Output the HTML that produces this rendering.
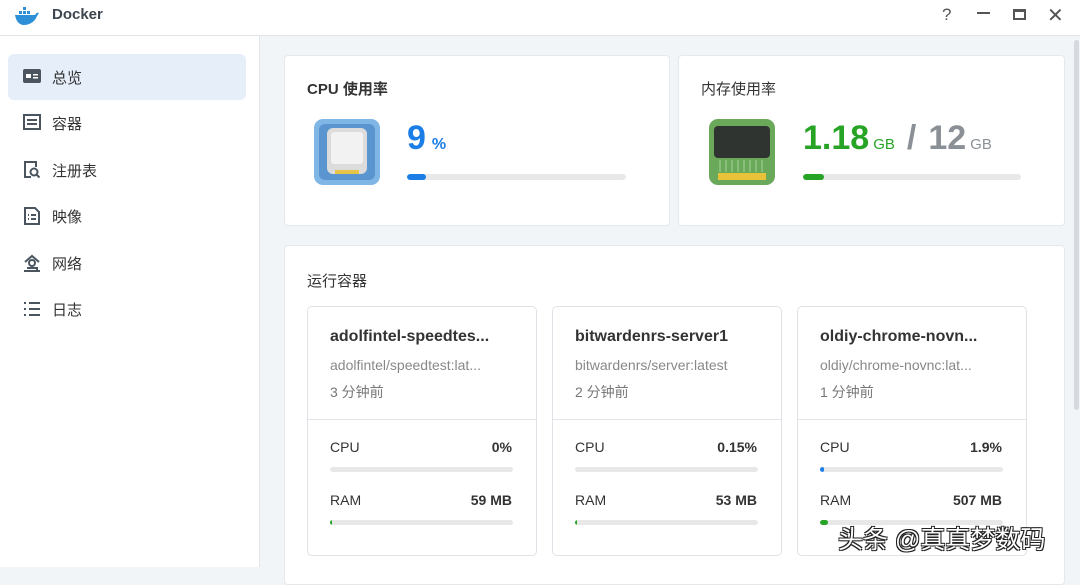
<!DOCTYPE html>
<html><head><meta charset="utf-8"><style>
*{box-sizing:border-box;margin:0;padding:0}
body{width:1080px;height:567px;overflow:hidden;background:#f2f5f8;font-family:"Liberation Sans","Noto Sans CJK SC",sans-serif;color:#333;position:relative}
.title{position:absolute;left:0;top:0;width:1080px;height:36px;background:#fff;border-bottom:1px solid #e2e6ea}
.title .t{position:absolute;left:52px;top:6px;font-weight:bold;font-size:15px;color:#3d4650}
.ctl{position:absolute;top:5px;font-size:17px;color:#555}
.side{position:absolute;left:0;top:36px;width:260px;height:531px;background:#fff;border-right:1px solid #e2e6ea}
.item{position:absolute;left:8px;width:238px;height:46px;border-radius:6px;font-size:15px;color:#333}
.item span{position:absolute;left:44px;top:13px}
.item svg{position:absolute;left:15px;top:14px}
.card{position:absolute;background:#fff;border:1px solid #e6e9ec;border-radius:4px}
h3{position:absolute;font-size:15px;font-weight:bold;color:#333}
.bar{position:absolute;height:6px;background:#e8e8e8;border-radius:3px;overflow:hidden}
.bar i{display:block;height:100%;border-radius:3px}
.cc{position:absolute;top:306px;width:230px;height:250px;background:#fff;border:1px solid #dfe3e7;border-radius:5px}
.cc .n{position:absolute;left:22px;top:21px;font-weight:bold;font-size:16px;color:#333}
.cc .im{position:absolute;left:22px;top:50px;font-size:14px;color:#888}
.cc .tm{position:absolute;left:22px;top:75px;font-size:14px;color:#777}
.cc hr{position:absolute;left:0;top:112px;width:228px;border:0;border-top:1px solid #e2e6ea}
.cc .l{position:absolute;left:22px;font-size:14px;color:#333}
.cc .v{position:absolute;right:24px;font-size:14px;font-weight:bold;color:#333}
.cc .bar{left:22px;width:183px;height:5px}
</style></head><body>
<div class="title">
<svg style="position:absolute;left:14px;top:6px" width="26" height="20" viewBox="0 0 26 20"><path d="M1 9h20c1-2 3-3 4-2-1 1-1 2-2 3-2 6-8 9-13 9C5 19 2 15 1 9z" fill="#2c8fd8"/><rect x="5" y="5" width="3" height="3" fill="#2c8fd8"/><rect x="9" y="5" width="3" height="3" fill="#2c8fd8"/><rect x="13" y="5" width="3" height="3" fill="#2c8fd8"/><rect x="9" y="1" width="3" height="3" fill="#2c8fd8"/></svg>
<div class="t">Docker</div>
<div class="ctl" style="left:942px">?</div>
<div class="ctl" style="left:977px;top:12px;width:13px;height:2px;background:#555"></div>
<div class="ctl" style="left:1013px;top:9px;width:13px;height:11px;border:2px solid #555;border-top-width:3px"></div>
<div class="ctl" style="left:1047px;top:3px;font-size:20px">✕</div>
</div>
<div class="side">
<div class="item" style="top:18px;background:#e6eefa"><svg width="18" height="16"><rect x="0" y="1" width="18" height="14" rx="2" fill="#4a5560"/><rect x="3" y="6" width="5" height="4" fill="#fff"/><rect x="10" y="6" width="5" height="1.5" fill="#fff"/><rect x="10" y="9" width="5" height="1.5" fill="#fff"/></svg><span>总览</span></div>
<div class="item" style="top:64px"><svg width="18" height="16"><rect x="1" y="1" width="16" height="14" fill="none" stroke="#4a5560" stroke-width="2"/><path d="M4 6h10M4 10h10" stroke="#4a5560" stroke-width="2"/></svg><span>容器</span></div>
<div class="item" style="top:111px"><svg width="18" height="18"><path d="M8 16H2V1h11v5" fill="none" stroke="#4a5560" stroke-width="2"/><circle cx="11" cy="11" r="3.5" fill="none" stroke="#4a5560" stroke-width="2"/><path d="M13.5 13.5l3 3" stroke="#4a5560" stroke-width="2"/></svg><span>注册表</span></div>
<div class="item" style="top:157px"><svg width="18" height="18"><path d="M2 1h10l4 4v12H2z" fill="none" stroke="#4a5560" stroke-width="2"/><path d="M5 8h1M5 12h1M8 8h5M8 12h5" stroke="#4a5560" stroke-width="2"/></svg><span>映像</span></div>
<div class="item" style="top:204px"><svg width="18" height="18"><path d="M2 8L9 2l7 6" fill="none" stroke="#4a5560" stroke-width="2"/><circle cx="9" cy="9" r="3" fill="none" stroke="#4a5560" stroke-width="2"/><path d="M4 14h10v3M1 17h16" stroke="#4a5560" stroke-width="2" fill="none"/></svg><span>网络</span></div>
<div class="item" style="top:250px"><svg width="18" height="18"><path d="M1 3h2M1 9h2M1 15h2M6 3h11M6 9h11M6 15h11" stroke="#4a5560" stroke-width="2"/></svg><span>日志</span></div>
</div>
<div style="position:absolute;left:1074px;top:40px;width:5px;height:370px;background:#d6dade;border-radius:3px"></div>

<div class="card" style="left:284px;top:55px;width:386px;height:171px">
<h3 style="left:22px;top:22px">CPU 使用率</h3>
<svg style="position:absolute;left:28px;top:62px" width="68" height="68"><rect x="1" y="1" width="66" height="66" rx="9" fill="#7fb6e6"/><rect x="6" y="6" width="56" height="56" rx="6" fill="#5b95cf"/><rect x="14" y="10" width="40" height="46" rx="6" fill="#dcdcdc"/><rect x="18" y="14" width="32" height="32" rx="3" fill="#f2f2f2"/><rect x="22" y="52" width="24" height="4" fill="#e6c44a"/></svg>
<div style="position:absolute;left:122px;top:63px;font-size:34px;font-weight:bold;color:#1a7ee6">9<span style="font-size:16px;margin-left:6px">%</span></div>
<div class="bar" style="left:122px;top:118px;width:219px"><i style="width:19px;background:#1a7ee6"></i></div>
</div>
<div class="card" style="left:678px;top:55px;width:387px;height:171px">
<h3 style="left:22px;top:22px;font-weight:normal">内存使用率</h3>
<svg style="position:absolute;left:29px;top:62px" width="68" height="68"><rect x="1" y="1" width="66" height="66" rx="9" fill="#6aa85a"/><rect x="6" y="8" width="56" height="32" rx="4" fill="#2f3431"/><path d="M12 42v12M18 42v12M24 42v12M30 42v12M36 42v12M42 42v12M48 42v12M54 42v12" stroke="#a8d29a" stroke-width="1"/><rect x="10" y="55" width="48" height="7" fill="#e8c33a"/></svg>
<div style="position:absolute;left:124px;top:63px;font-size:34px;font-weight:bold;color:#27a325">1.18<span style="font-size:15px;font-weight:normal;margin-left:4px">GB</span><span style="color:#8a9096;margin-left:12px">/</span><span style="color:#8a9096;margin-left:12px">12</span><span style="font-size:15px;font-weight:normal;color:#8a9096;margin-left:4px">GB</span></div>
<div class="bar" style="left:124px;top:118px;width:218px"><i style="width:21px;background:#27a325"></i></div>
</div>

<div class="card" style="left:284px;top:245px;width:781px;height:340px">
<h3 style="left:22px;top:24px;font-weight:normal">运行容器</h3>
</div>

<div class="cc" style="left:307px"><div class="n">adolfintel-speedtes...</div><div class="im">adolfintel/speedtest:lat...</div><div class="tm">3 分钟前</div><hr>
<div class="l" style="top:132px">CPU</div><div class="v" style="top:132px">0%</div><div class="bar" style="top:160px"></div>
<div class="l" style="top:185px">RAM</div><div class="v" style="top:185px">59 MB</div><div class="bar" style="top:213px"><i style="width:2px;background:#27a325"></i></div></div>
<div class="cc" style="left:552px"><div class="n">bitwardenrs-server1</div><div class="im">bitwardenrs/server:latest</div><div class="tm">2 分钟前</div><hr>
<div class="l" style="top:132px">CPU</div><div class="v" style="top:132px">0.15%</div><div class="bar" style="top:160px"></div>
<div class="l" style="top:185px">RAM</div><div class="v" style="top:185px">53 MB</div><div class="bar" style="top:213px"><i style="width:2px;background:#27a325"></i></div></div>
<div class="cc" style="left:797px"><div class="n">oldiy-chrome-novn...</div><div class="im">oldiy/chrome-novnc:lat...</div><div class="tm">1 分钟前</div><hr>
<div class="l" style="top:132px">CPU</div><div class="v" style="top:132px">1.9%</div><div class="bar" style="top:160px"><i style="width:4px;background:#1a7ee6"></i></div>
<div class="l" style="top:185px">RAM</div><div class="v" style="top:185px">507 MB</div><div class="bar" style="top:213px"><i style="width:8px;background:#27a325"></i></div></div>
<div style="position:absolute;left:838px;top:520px;font-size:25px;color:#fff;text-shadow:-1px -1px 0 #222,1px -1px 0 #222,-1px 1px 0 #222,1px 1px 0 #222;font-family:'Liberation Sans','Noto Sans CJK SC',sans-serif">头条 @真真梦数码</div>
</body></html>
